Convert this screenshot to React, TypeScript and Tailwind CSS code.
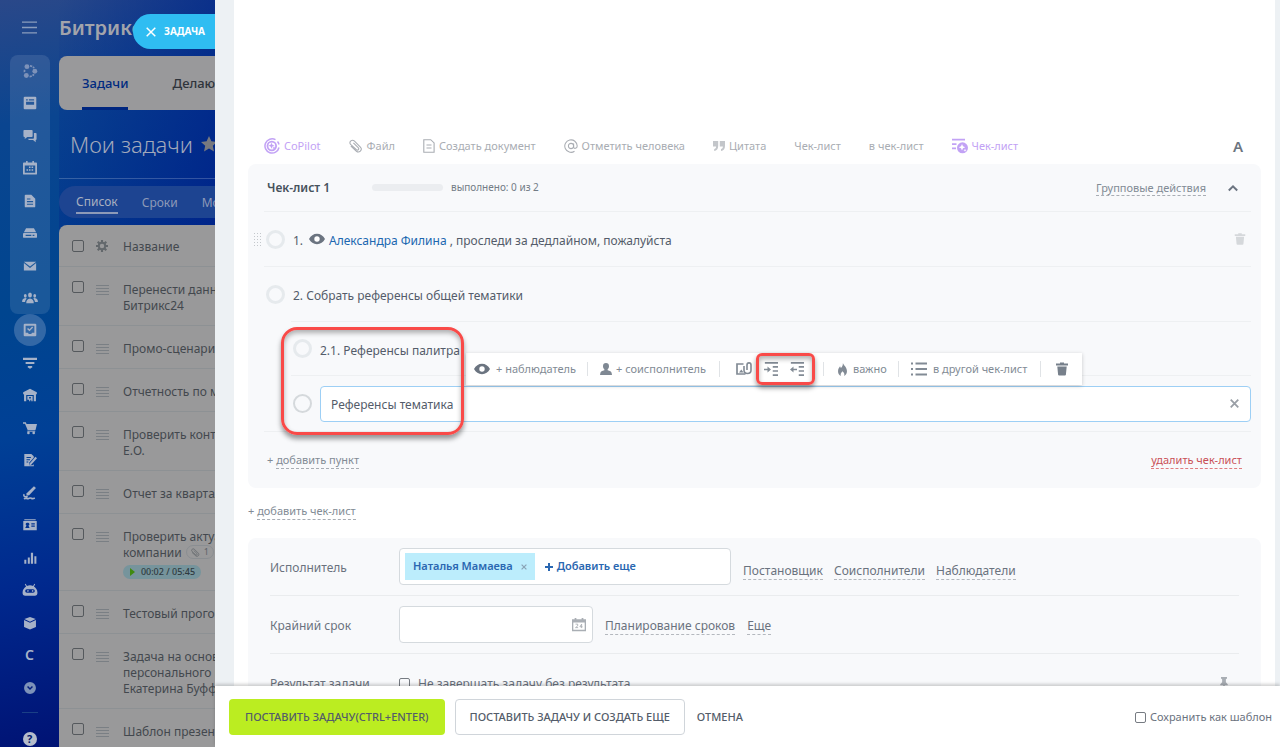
import type { ReactNode } from "react";

type IconProps = { className?: string };

const Svg = ({
  children,
  className = "size-4",
  box = "0 0 16 16",
}: {
  children: ReactNode;
  className?: string;
  box?: string;
}) => (
  <svg viewBox={box} className={`shrink-0 ${className}`} fill="currentColor" aria-hidden="true">
    {children}
  </svg>
);

/* ---------- sidebar icons ---------- */

const sideTop: { label: string; icon: ReactNode; dim?: boolean }[] = [
  {
    label: "Совместная работа",
    dim: true,
    icon: (
      <>
        <circle cx="4.5" cy="3" r="2.8" />
        <circle cx="13.5" cy="8.2" r="2.8" />
        <circle cx="3.8" cy="13.2" r="2.8" />
        <path d="M8 2.200c2.200.1 3.800 1.100 4.600 2.600M7.500 14.300c2.200 0 3.900-1 4.900-2.600M2 6.700c-.5 1.100-.5 2 0 3" stroke="currentColor" strokeWidth="2" strokeDasharray="2.600 1" fill="none" />
      </>
    ),
  },
  {
    label: "Лента",
    icon: <path fillRule="evenodd" d="M2 .8h12A1.200 1.200 0 0 1 15.200 2v12a1.200 1.200 0 0 1-1.200 1.200H2A1.200 1.200 0 0 1 .8 14V2A1.200 1.200 0 0 1 2 .8zM3.500 3.800v1.300h2V3.800zm3.200 0v1.300h6V3.800zM3.500 6.600V10h9.200V6.600z" />,
  },
  {
    label: "Мессенджер",
    icon: (
      <>
        <path d="M1.500 1h8.500a1 1 0 0 1 1 1v6a1 1 0 0 1-1 1H5l-3 2.500V9h-.5a1 1 0 0 1-1-1V2a1 1 0 0 1 1-1z" />
        <path d="M12.500 4.500h2a1 1 0 0 1 1 1v6a1 1 0 0 1-1 1V15l-3-2.500H7a1 1 0 0 1-1-1V11h5.500a1 1 0 0 0 1-1z" />
      </>
    ),
  },
  {
    label: "Календарь",
    icon: <path fillRule="evenodd" d="M3.500 0h1.800v1.800h5.400V0h1.800v1.800H15a1 1 0 0 1 1 1v11.700a1 1 0 0 1-1 1H1a1 1 0 0 1-1-1V2.800a1 1 0 0 1 1-1h2.500zM2 5v8.500h12V5zM6.800 6.300h1.800v1.800H6.800zm3 0h1.800v1.800H9.800zM4 9.300h1.800v1.800H4zm2.800 0h1.800v1.800H6.800zm3 0h1.800v1.800H9.800z" />,
  },
  {
    label: "Документы",
    icon: <path fillRule="evenodd" d="M3 .8h6.500L14 5.300v8.900a1 1 0 0 1-1 1H3a1 1 0 0 1-1-1V1.800a1 1 0 0 1 1-1zM4.500 5v1.300h4V5zm0 3v1.300h7V8zm0 3v1.300h7V11z" />,
  },
  {
    label: "Диск",
    icon: <path fillRule="evenodd" d="M3.500 2.500h9L15 7H1zM1 8h14a1 1 0 0 1 1 1v3.500a1 1 0 0 1-1 1H1a1 1 0 0 1-1-1V9a1 1 0 0 1 1-1zM3 10v1.500h6.500V10zm8 0v1.500h2V10z" />,
  },
  {
    label: "Почта",
    icon: (
      <>
        <path d="M1 3h14L8 8.700z" />
        <path d="M1 4.700v8.500h14V4.700L8 10.300z" />
      </>
    ),
  },
  {
    label: "Группы",
    icon: (
      <>
        <ellipse cx="8" cy="4.500" rx="2.200" ry="2.900" />
        <path d="M3.700 14c0-3.400 1.300-5 4.300-5.400 3 .4 4.300 2 4.300 5.400z" />
        <ellipse cx="2.600" cy="5.500" rx="1.600" ry="2.100" />
        <ellipse cx="13.400" cy="5.500" rx="1.600" ry="2.100" />
        <path d="M-1 12.500c0-2.700.9-4 3.700-4.400.8.100 1.300.300 1.600.6-1 .9-1.700 2.200-1.900 3.800zM17 12.500c0-2.700-.9-4-3.700-4.400-.8.100-1.300.3-1.600.6 1 .9 1.700 2.200 1.900 3.800z" />
      </>
    ),
  },
];

const sideBottom: { label: string; icon: ReactNode; active?: boolean; dim?: boolean }[] = [
  {
    label: "Задачи",
    active: true,
    icon: (
      <>
        <path fillRule="evenodd" d="M2 .8h12a1.200 1.200 0 0 1 1.200 1.200v12a1.200 1.200 0 0 1-1.200 1.200H2A1.200 1.200 0 0 1 .8 14V2A1.200 1.200 0 0 1 2 .8zM3 3v8h2.500l1.200 1.700h2.600L10.500 11H13V3z" />
        <path d="M5.200 6.200l2.200 2.200 3.600-3.900" stroke="currentColor" strokeWidth="1.600" fill="none" />
      </>
    ),
  },
  { label: "CRM", icon: <path d="M0 2h16v2.600H0zM3 6.800h10v2.400H3zM5.500 11.400h5v2h-1l-.6.800H7.100l-.6-.8h-1z" /> },
  { label: "Склад", icon: <path fillRule="evenodd" d="M8 .8l7.800 4v2.400h-1v8h-2.500V8H3.700v7.200H1.200v-8h-1V4.800zM5 9h6v6.200H9.500v-1.700H8.300v1.700H7v-1.700H5zM7 10.300v1.700h2v-1.700z" /> },
  {
    label: "Магазин",
    icon: (
      <>
        <path d="M0 1.500h3.300l.7 2h12l-1.700 6.700H5.300L2.300 3H0z" />
        <path d="M5 11h9v1.200H5z" />
        <circle cx="6.200" cy="13.600" r="1.500" />
        <circle cx="12.200" cy="13.600" r="1.500" />
      </>
    ),
  },
  {
    label: "Договоры",
    icon: (
      <>
        <path fillRule="evenodd" d="M1.500 1h8l2.800 2.800v1.700L7 11.200V14h4l1.300-1.200V15H1.500zM4 4.500v1.200h5V4.500zm0 2.600v1.200h4V7.100zm0 2.600v1.200h2V9.700z" />
        <path d="M14.200 4.300l1.800 1.600-6.700 7.400-2.400 1 .9-2.500z" />
      </>
    ),
  },
  {
    label: "Подпись",
    icon: (
      <>
        <path d="M12.500.2l2.300 2L7 10.500l-3.200.7.400-2.800z" />
        <path d="M1.500 9.500c-1.500 2 .5 3.300 4 2.800M1 14.500c2.500-1 3.500.5 5 0s2-1.500 3.500-.5 2.500.5 4-.3" stroke="currentColor" strokeWidth="1.800" fill="none" />
      </>
    ),
  },
  { label: "Сотрудники", icon: <path fillRule="evenodd" d="M1.500 1.500h13v1.200h-13zM.3 3.500h15.400v10.500H.3zM5 5.500a1.700 1.700 0 0 0-1 3.200L2.500 11.500h5L6.200 8.700A1.700 1.700 0 0 0 5 5.500zm4.500.5v1.300h4V6zm0 2.700V10h4V8.700z" /> },
  { label: "Аналитика", icon: <path d="M1.500 10h2.300v4.500H1.500zM5.500 7.500h2.300v7H5.500zM9 2h2.500v12.500H9zM13 6h2.300v8.500H13z" /> },
  { label: "Роботы", icon: <path fillRule="evenodd" d="M3 .8l1.500 2.600a8 8 0 0 1 7 0L13 .8l.9.500-1.400 2.600C15 5.600 16.500 8 16.500 11c0 2-1 3.500-3 3.500h-11c-2 0-3-1.500-3-3.500 0-3 1.500-5.400 4-7.100L2.100 1.300zM4.500 7a2 2 0 0 0 0 4h7a2 2 0 0 0 0-4zm.8 1.200a.9.9 0 1 1 0 1.700.9.900 0 0 1 0-1.700zm5.400 0a.9.900 0 1 1 0 1.700.9.900 0 0 1 0-1.700z" /> },
  {
    label: "Маркет",
    icon: (
      <>
        <path d="M8 1l6.500 2.500L8 6.500 1.500 3.500z" />
        <path d="M1.200 4.700L8 7.800l6.800-3.100v7.800L8 15.500l-6.800-3z" />
      </>
    ),
  },
  { label: "C", icon: null },
  {
    label: "Ещё",
    dim: true,
    icon: <path fillRule="evenodd" d="M8 1.200a6.800 6.800 0 1 1 0 13.600A6.800 6.800 0 0 1 8 1.200zM4.600 6.900L8 10.300l3.400-3.400-1.200-1.200L8 7.900 5.800 5.700z" />,
  },
];

/* ---------- panel icons ---------- */

const Eye = ({ className = "size-4" }: IconProps) => (
  <Svg className={className}>
    <path d="M8 2.800c3.500 0 6.200 2 8 5.200-1.800 3.200-4.500 5.200-8 5.200S1.800 11.200 0 8c1.800-3.200 4.500-5.200 8-5.200z" />
    <circle cx="8" cy="8" r="2.700" fill="#fff" />
  </Svg>
);

const Trash = ({ className = "size-4" }: IconProps) => (
  <Svg className={className}>
    <path d="M6 1.500h4v1h4V4.500H2v-2h4zM3.300 5.500h9.400l-.8 8.200a1 1 0 0 1-1 .8H5.100a1 1 0 0 1-1-.8z" />
  </Svg>
);

const Paperclip = ({ className = "size-[14px]" }: IconProps) => (
  <Svg className={className}>
    <path d="M2.500 8.500L8.500 14c3 2.500 7.500-1.500 4.500-4.800L6 2.200C3.500 0-.5 3.200 1.800 6.200l6.700 6c1.800 1.300 3.600-.7 2-2.400L5.300 4.800" stroke="currentColor" strokeWidth="1.200" fill="none" strokeLinecap="round" />
  </Svg>
);

const Sparkle = "M0-3L.9-.9 3 0 .9.9 0 3-.9.9-3 0-.9-.9z";

const editorTools: { text: string; violet?: boolean; icon?: ReactNode }[] = [
  {
    text: "CoPilot",
    violet: true,
    icon: (
      <Svg>
        <path d="M15 9.500A7.100 7.100 0 1 1 11.500 1.700M13.500 3.500A7 7 0 0 1 15 6.500" stroke="currentColor" strokeWidth="1.500" fill="none" />
        <circle cx="7.800" cy="8" r="4.300" stroke="currentColor" strokeWidth="1.800" fill="none" />
        <path d={Sparkle} transform="translate(7.500 7.700)" />
        <path d={Sparkle} transform="translate(10 10) scale(.6)" />
      </Svg>
    ),
  },
  { text: "Файл", icon: <Paperclip /> },
  {
    text: "Создать документ",
    icon: (
      <Svg className="h-4 w-3" box="0 0 12 16">
        <path d="M.8 1.700h6.900l3.400 3.200v9.400H.8zM3.500 7h5M3.500 10h5" stroke="currentColor" strokeWidth="1.100" fill="none" />
      </Svg>
    ),
  },
  {
    text: "Отметить человека",
    icon: (
      <Svg className="size-[14px]">
        <circle cx="8" cy="8" r="3" stroke="currentColor" strokeWidth="1.200" fill="none" />
        <path d="M11 5v4c0 2.700 4.100 2 4.100-1A7.100 7.100 0 1 0 12 14" stroke="currentColor" strokeWidth="1.200" fill="none" />
      </Svg>
    ),
  },
  {
    text: "Цитата",
    icon: (
      <Svg className="h-4 w-3 text-[#c3c6ca]" box="0 0 12 16">
        <path d="M0 3h5.200v5c0 2.800-1.500 4.600-4 5v-2c1.200-.3 1.900-1.100 1.900-2.500H0zM6.800 3H12v5c0 2.800-1.500 4.600-4 5v-2c1.200-.3 1.900-1.100 1.900-2.500H6.800z" />
      </Svg>
    ),
  },
  { text: "Чек-лист" },
  { text: "в чек-лист" },
  {
    text: "Чек-лист",
    violet: true,
    icon: (
      <Svg>
        <path d="M0 .8h13v1.600H0zM0 5.200h4.500v1.700H0zM0 9.600h4v1.700H0z" />
        <circle cx="10.500" cy="9.800" r="5.500" />
        <path d={Sparkle} transform="translate(10 9.200) scale(1.100)" fill="#fff" />
        <path d={Sparkle} transform="translate(13 12.200) scale(.5)" fill="#fff" />
      </Svg>
    ),
  },
];

/* ---------- background page ---------- */

const tasks = [
  { name: "Перенести данные\nБитрикс24" },
  { name: "Промо-сценарий" },
  { name: "Отчетность по месяцу" },
  { name: "Проверить контент\nЕ.О." },
  { name: "Отчет за квартал" },
  { name: "Проверить актуальность\nкомпании", files: 1, timer: "00:02 / 05:45" },
  { name: "Тестовый прогон" },
  { name: "Задача на основе\nперсонального плана\nЕкатерина Буффало" },
  { name: "Шаблон презентации" },
];

const SideButton = ({ label, icon, active, dim }: { label: string; icon: ReactNode; active?: boolean; dim?: boolean }) => (
  <button
    aria-label={label}
    className={`size-8 shrink-0 flex items-center justify-center rounded-full ${active ? "bg-[#3368a6]" : ""} ${dim ? "text-[#7d92b9]" : "text-[#a6b2c8]"}`}
  >
    {icon ? <Svg className="size-[14px] overflow-visible">{icon}</Svg> : <span className="text-sm font-semibold">C</span>}
  </button>
);

function Sidebar() {
  return (
    <nav className="w-[59px] shrink-0 flex flex-col items-center">
      <button aria-label="Меню" className="h-[55px] shrink-0 flex items-center justify-center text-[#8a9dbd]">
        <Svg className="size-[15px]">
          <path d="M0 1.500h16V3H0zM0 7.200h16v1.500H0zM0 13h16v1.500H0z" />
        </Svg>
      </button>
      <div className="w-10 h-[259px] shrink-0 flex flex-col justify-between items-center rounded-lg bg-white/10">
        {sideTop.map((item) => (
          <SideButton key={item.label} {...item} />
        ))}
      </div>
      <div className="h-[390px] shrink-0 flex flex-col justify-between items-center">
        {sideBottom.map((item) => (
          <SideButton key={item.label} {...item} />
        ))}
      </div>
      <div className="mt-2 mb-[10px] w-4 h-px shrink-0 bg-[#1a3f86]" />
      <button aria-label="Помощь" className="h-8 shrink-0">
        <span className="size-[14px] rounded-full bg-[#b4bccb] text-[#00176b] text-[11px] font-bold flex items-center justify-center">?</span>
      </button>
    </nav>
  );
}

function TaskTable() {
  return (
    <table className="w-full border-separate border-spacing-0 rounded-tl-lg bg-[#99999a] text-[#43484e]">
      <thead>
        <tr className="h-[42px] text-left">
          <th className="w-8 pl-[13px] border-b border-[#8d9194]">
            <input type="checkbox" aria-label="Выбрать все" className="block size-3 appearance-none rounded-xs border border-[#55595d]" />
          </th>
          <th className="w-8 pl-[5px] border-b border-[#8d9194]">
            <Svg className="size-3 text-[#63686c]">
              <path d="M8 0v16M0 8h16M2.300 2.300l11.400 11.400M13.700 2.300L2.300 13.700" stroke="currentColor" strokeWidth="2.800" />
              <circle cx="8" cy="8" r="4.300" stroke="currentColor" strokeWidth="2.600" fill="#99999a" />
            </Svg>
          </th>
          <th className="pt-0.5 border-b border-[#8d9194] text-xs font-normal">Название</th>
        </tr>
      </thead>
      <tbody>
        {tasks.map((task) => (
          <tr key={task.name} className="align-top">
            <td className="pl-[13px] pt-[14px] border-b border-[#8d9194]">
              <input type="checkbox" aria-label={task.name} className="block size-3 appearance-none rounded-xs border border-[#55595d]" />
            </td>
            <td className="pl-[5px] pt-[18px] border-b border-[#8d9194] text-[#7a7f84]">
              <Svg className="block w-[13px] h-3" box="0 0 13 12">
                <path d="M0 0h13v1H0zM0 3h13v1H0zM0 6h13v1H0zM0 9h13v1H0z" />
              </Svg>
            </td>
            <td className="pt-[15px] pb-[11px] border-b border-[#8d9194] text-xs leading-4 whitespace-pre">
              {task.name}
              {task.files && (
                <span className="ml-1 inline-flex h-[14px] items-center gap-1 rounded-full border border-[#8a8e92] px-1 text-[9px] text-[#5d6267] align-top">
                  <Paperclip className="size-[9px]" />
                  {task.files}
                </span>
              )}
              {task.timer && (
                <span className="mt-1 flex w-[78px] h-3 items-center justify-center gap-1 rounded-full bg-[#76949c] py-[7px] text-[9px] text-[#2f3a40] font-medium">
                  <Svg className="size-2 text-[#3f8a10]" box="0 0 8 8">
                    <path d="M1 0l5 4-5 4z" />
                  </Svg>
                  {task.timer}
                </span>
              )}
            </td>
          </tr>
        ))}
      </tbody>
    </table>
  );
}

function TasksPage() {
  return (
    <div className="relative w-[215px] h-full shrink-0 overflow-hidden flex bg-[linear-gradient(170deg,#2a4889_0%,#0a4590_16%,#00458f_40%,#004096_56%,#00298e_75%,#000f70_100%)]">
      <Sidebar />
      <div className="w-[400px] shrink-0 flex flex-col bg-[linear-gradient(110deg,#1c469400_0%,#00258a_35%)]">
        <div className="h-14 shrink-0 flex items-center text-xl font-semibold text-[#a2a4ab]">Битрикс24</div>
        <div className="h-[54px] shrink-0 flex gap-[44px] pl-[23px] rounded-l-lg bg-[#99999b] text-[13px] text-[#2f343b] font-medium">
          <button className="border-b-3 border-[#00267f] pt-[5px] text-[#002a80]">Задачи</button>
          <button className="pt-0.5">Делаю</button>
        </div>
        <div className="h-[69px] shrink-0 flex items-center gap-2 pl-[11px] border-b border-white/20 font-light text-[22px] text-[#a2a9bb]">
          Мои задачи
          <Svg className="size-4 text-[#77797f]">
            <path d="M8 0l2.400 5.200 5.600.7-4.200 3.900 1.200 5.700L8 12.600 3 15.500l1.200-5.700L0 5.900l5.600-.7z" />
          </Svg>
        </div>
        <div className="mt-[7px] h-8 shrink-0 flex items-center gap-6 pl-[17px] pt-0.5 rounded-l-full bg-[#1d4491] text-xs text-[#8d9ab8]">
          <button className="border-b-2 border-[#8d9ab8] text-[#a9b0c0] leading-5">Список</button>
          <button>Сроки</button>
          <button>Мой план</button>
        </div>
        <div className="pt-[7px]">
          <TaskTable />
        </div>
      </div>
      <button className="absolute right-0 top-[14px] h-[35px] w-[82px] pl-[13px] flex items-center gap-2 rounded-l-full bg-[#2fbdf2] text-white text-[10px] font-bold">
        <Svg className="size-[10px]" box="0 0 10 10">
          <path d="M.7.7l8.600 8.600M9.300.7L.7 9.300" stroke="currentColor" strokeWidth="1.500" />
        </Svg>
        ЗАДАЧА
      </button>
    </div>
  );
}

/* ---------- checklist ---------- */

const Round = ({ label, strong }: { label: string; strong?: boolean }) => (
  <input
    type="checkbox"
    aria-label={label}
    className={`size-[19px] shrink-0 appearance-none rounded-full ${strong ? "border-2 border-[#d5d9dc]" : "border-3 border-[#e6eaed]"}`}
  />
);

function ItemToolbar() {
  return (
    <div className="absolute left-[202px] top-8 z-10 flex h-8 items-center bg-white pl-2 pr-3 text-[11px] text-[#828b95] shadow-[0_1px_4px_rgba(0,0,0,.2)] whitespace-nowrap">
      <button className="flex items-center gap-[6px] w-[113px]">
        <Eye className="size-4 text-[#6b7480]" />+ наблюдатель
      </button>
      <button className="flex items-center gap-1 w-[132px] border-l border-[#e0e3e6] pl-3">
        <Svg className="size-3 text-[#7f8893]">
          <path d="M8 0c2.600 0 4 1.700 4 4.200 0 1.700-.7 3.300-1.800 4.200v1.400c3 .6 5 1.500 5.300 3.600L16 16H0l.5-2.600c.3-2.100 2.300-3 5.300-3.600V8.400C4.700 7.500 4 5.900 4 4.200 4 1.700 5.400 0 8 0z" />
        </Svg>
        + соисполнитель
      </button>
      <div className="flex items-center gap-3 w-[104px] border-l border-[#e0e3e6] pl-4">
        <button aria-label="Прикрепить файл">
          <Svg>
            <path d="M7.500 3H1v10h8.500" stroke="currentColor" strokeWidth="1.700" fill="none" />
            <path d="M3 11.500l2.300-3 2.300 3z" />
            <path d="M8 5v4.200c0 4.300 7 4.300 7 0V4c0-2.900-4-2.900-4 0v5" stroke="currentColor" strokeWidth="1.600" fill="none" />
          </Svg>
        </button>
        <div className="relative flex gap-3">
          <button aria-label="Сделать подпунктом">
            <Svg className="size-[14px]">
              <path d="M1 0h15v1.900H1zM10 4.600h6v1.900h-6zM10 9.300h6v1.900h-6zM10 14h6v1.900h-6zM0 7.600h4V5l4 3.500-4 3.500V9.400H0z" />
            </Svg>
          </button>
          <button aria-label="Поднять уровень">
            <Svg className="size-[14px]">
              <path d="M1 0h15v1.900H1zM10 4.600h6v1.900h-6zM10 9.300h6v1.900h-6zM10 14h6v1.900h-6zM8 7.600H4V5L0 8.500 4 12V9.400h4z" />
            </Svg>
          </button>
          <div className="absolute -left-2 -right-[11px] -inset-y-[9px] rounded-md border-3 border-[#f94a48] shadow-[0_3px_5px_rgba(0,0,0,.4),inset_0_3px_5px_rgba(0,0,0,.3)]" />
        </div>
      </div>
      <button className="flex items-center gap-1 w-[75px] border-l border-[#e0e3e6] pl-3">
        <Svg className="size-[13px]">
          <path fillRule="evenodd" d="M8.500 0c.5 2.500 5 5 5 10 0 3-1.700 5-3.500 6 .8-2.300.3-4-2-6-2 2-2.700 3.700-2 6-2-1-3.500-3-3.500-6C2.500 7 4 5.500 5 4l1 2C8 4.500 8.500 2.500 8.500 0z" />
        </Svg>
        важно
      </button>
      <button className="flex items-center gap-[6px] w-[142px] border-l border-[#e0e3e6] pl-3">
        <Svg>
          <path d="M0 1.500h2v2H0zM4.500 1.500H16v1.900H4.500zM0 7h2v2H0zM4.500 7H16v1.900H4.500zM0 12.500h2v2H0zM4.500 12.500H16v1.900H4.500z" />
        </Svg>
        в другой чек-лист
      </button>
      <button aria-label="Удалить пункт" className="border-l border-[#e0e3e6] pl-[13px]">
        <Trash className="size-4 text-[#77808b]" />
      </button>
    </div>
  );
}

function Checklist() {
  return (
    <section className="rounded-lg bg-[#f8f9fb] pl-4 pr-[10px] text-xs text-[#545c6a]">
      <header className="flex h-12 items-center border-b border-[#eef0f2] pl-[3px]">
        <h2 className="w-[105px] font-semibold text-[#46525c]">Чек-лист 1</h2>
        <div className="w-[71px] h-[7px] rounded-full bg-[#ebedf0]" />
        <span className="ml-2 text-[10px] text-[#737c86]">выполнено: 0 из 2</span>
        <a href="#group" className="ml-auto text-[11px] leading-[15px] text-[#828b95] border-b border-dashed border-[#a8adb4]">Групповые действия</a>
        <button aria-label="Свернуть" className="ml-[22px] mr-[13px] text-[#6b7480]">
          <Svg className="size-[10px]" box="0 0 10 10">
            <path d="M.8 7.500L5 3.300l4.200 4.200" stroke="currentColor" strokeWidth="2" fill="none" />
          </Svg>
        </button>
      </header>
      <div className="relative flex h-[55px] items-center border-b border-[#eef0f2] pl-0.5">
        <div className="absolute -left-[10px] grid grid-cols-3 gap-[2px]">
          {[...Array(15)].map((_, i) => (
            <span key={i} className="size-px bg-[#c4c8cc]" />
          ))}
        </div>
        <Round label="Пункт 1" />
        <span className="ml-2 w-4 pt-1">1.</span>
        <Eye className="size-4 text-[#6b7480]" />
        <span className="pl-1 pt-1 whitespace-pre">
          <a href="#user" className="text-[#2067b0]">Александра Филина</a> , проследи за дедлайном, пожалуйста
        </span>
        <button aria-label="Удалить" className="ml-auto mr-1 text-[#d5d8db]">
          <Trash className="size-[14px]" />
        </button>
      </div>
      <div className="flex h-[54px] items-center pl-0.5">
        <Round label="Пункт 2" />
        <span className="ml-2 pt-1">2. Собрать референсы общей тематики</span>
      </div>
      <div className="relative border-b border-[#eef0f2] h-[111px]">
        <div className="ml-[27px] flex h-[55px] items-center border-y border-[#eef0f2] pl-0.5">
          <Round label="Пункт 2.1" />
          <span className="ml-2 pt-1">2.1. Референсы палитра</span>
        </div>
        <div className="flex h-[55px] items-center pl-[29px]">
          <Round label="Новый пункт" strong />
          <div className="ml-2 flex flex-1 h-9 items-center rounded-sm border border-[#9dcff5] bg-white pl-[10px] pr-[11px]">
            <input aria-label="Название пункта" defaultValue="Референсы тематика" className="flex-1 pt-0.5 outline-none" />
            <button aria-label="Очистить" className="text-[#9a9fa6]">
              <Svg className="size-[9px]" box="0 0 10 10">
                <path d="M.8.8l8.400 8.400M9.200.8L.8 9.200" stroke="currentColor" strokeWidth="2" />
              </Svg>
            </button>
          </div>
        </div>
        <ItemToolbar />
        <div className="absolute left-[17px] top-[6px] z-20 w-[183px] h-[108px] pointer-events-none rounded-2xl border-3 border-[#f94a48] shadow-[0_4px_5px_rgba(0,0,0,.4),inset_0_3px_5px_rgba(0,0,0,.3)]" />
      </div>
      <footer className="flex h-14 items-center justify-between pl-[3px] pr-[9px] text-[11px] text-[#828b95]">
        <span>
          + <a href="#add" className="inline-block leading-[17px] border-b border-dashed border-[#a8adb4]">добавить пункт</a>
        </span>
        <a href="#remove" className="leading-[17px] text-[#c94f55] border-b border-dashed border-[#e07b80]">удалить чек-лист</a>
      </footer>
    </section>
  );
}

/* ---------- task form ---------- */

const FormLink = ({ children }: { children: ReactNode }) => (
  <a href="#more" className="leading-[17px] border-b border-dashed border-[#b4b8be]">{children}</a>
);

function TaskForm() {
  return (
    <section className="rounded-lg bg-[#f8f9fb] px-[22px] text-xs text-[#6a727e]">
      <div className="flex h-[58px] items-center border-b border-[#eaecee]">
        <label htmlFor="assignee" className="w-[129px] pt-0.5">Исполнитель</label>
        <div className="flex h-[37px] w-[332px] items-center rounded-sm border border-[#d5dade] bg-white pl-[5px] text-[11px] font-semibold text-[#2a67b1]">
          <span className="flex h-[27px] items-center gap-2 bg-[#bcedfc] px-2">
            Наталья Мамаева
            <button aria-label="Убрать исполнителя" className="text-[#8aa3b5]">
              <Svg className="size-[6px]" box="0 0 10 10">
                <path d="M1 1l8 8M9 1L1 9" stroke="currentColor" strokeWidth="2" />
              </Svg>
            </button>
          </span>
          <button id="assignee" className="ml-[10px] flex items-center gap-1">
            <Svg className="size-2" box="0 0 8 8">
              <path d="M3 0h2v3h3v2H5v3H3V5H0V3h3z" />
            </Svg>
            Добавить еще
          </button>
        </div>
        <div className="flex gap-[11px] pl-3 pt-2">
          <FormLink>Постановщик</FormLink>
          <FormLink>Соисполнители</FormLink>
          <FormLink>Наблюдатели</FormLink>
        </div>
      </div>
      <div className="flex h-[58px] items-center border-b border-[#eaecee]">
        <label htmlFor="deadline" className="w-[129px] pt-0.5">Крайний срок</label>
        <div className="flex h-[37px] w-[194px] items-center rounded-sm border border-[#d5dade] bg-white pr-[6px]">
          <input id="deadline" className="min-w-0 flex-1 pl-2 outline-none" />
          <Svg className="size-[14px] text-[#a9aeb4]">
            <path fillRule="evenodd" d="M3 0h2v1.500h6V0h2v1.500h3V15H0V1.500h3zM1.500 5v8.500h13V5z" />
            <path d="M4 7h2.500v2L4 11h3M11 11.500V7L9 10h3" stroke="currentColor" fill="none" />
          </Svg>
        </div>
        <div className="flex gap-3 pl-3 pt-0.5">
          <FormLink>Планирование сроков</FormLink>
          <FormLink>Еще</FormLink>
        </div>
      </div>
      <div className="flex h-[58px] items-center">
        <span className="w-[129px] pt-0.5">Результат задачи</span>
        <input id="result" type="checkbox" className="size-[11px] appearance-none rounded-xs border border-[#767b82]" />
        <label htmlFor="result" className="pl-2 pt-0.5">Не завершать задачу без результата</label>
        <button aria-label="Закрепить" className="ml-auto mr-[9px] text-[#a9aeb4]">
          <Svg className="size-3">
            <path d="M4 0h8v2l-1.500 1v4L13 9.500V11H9v5H7v-5H3V9.500L5.500 7V3L4 2z" />
          </Svg>
        </button>
      </div>
    </section>
  );
}

export default function App() {
  return (
    <div className="h-screen flex overflow-hidden bg-white font-['Noto_Sans',sans-serif]">
      <TasksPage />

      {/* slider panel */}
      <main className="flex-1 min-w-0 flex flex-col">
        <div className="flex-1 min-h-0 overflow-hidden border-l-[19px] border-r-5 border-[#edf1f4] px-[14px]">
          <div className="h-[128px]" />
          <div className="flex h-9 items-center gap-7 pl-4 pr-[18px] text-[11px] text-[#a9adb3] whitespace-nowrap">
            {editorTools.map((tool, i) => (
              <button key={i} className={`flex items-center gap-1 ${tool.violet ? "text-[#c2a2f5]" : ""}`}>
                {tool.icon}
                {tool.text}
              </button>
            ))}
            <button className="ml-auto text-[15px] font-semibold text-[#6b7480]">A</button>
          </div>
          <Checklist />
          <div className="flex h-[50px] items-center pb-1 text-[11px] text-[#828b95] whitespace-pre">
            + <a href="#list" className="leading-4 border-b border-dashed border-[#a8adb4]">добавить чек-лист</a>
          </div>
          <TaskForm />
        </div>
        <footer className="relative flex h-[61px] shrink-0 items-center bg-white pl-[14px] pr-2 text-[11px] font-medium text-[#535c69] shadow-[0_-2px_3px_rgba(0,0,0,.18)] whitespace-nowrap">
          <button className="h-9 rounded-sm bg-[#bbed21] px-4 pt-0.5">ПОСТАВИТЬ ЗАДАЧУ(CTRL+ENTER)</button>
          <button className="ml-[10px] h-9 rounded-sm border border-[#d0d5da] px-[14px] pt-0.5">ПОСТАВИТЬ ЗАДАЧУ И СОЗДАТЬ ЕЩЕ</button>
          <button className="ml-3 pt-0.5">ОТМЕНА</button>
          <label className="ml-auto flex items-center gap-1 pt-0.5 font-normal text-[#6a727e]">
            <input type="checkbox" className="size-[11px] appearance-none rounded-xs border border-[#767b82]" />
            Сохранить как шаблон
          </label>
        </footer>
      </main>
    </div>
  );
}
